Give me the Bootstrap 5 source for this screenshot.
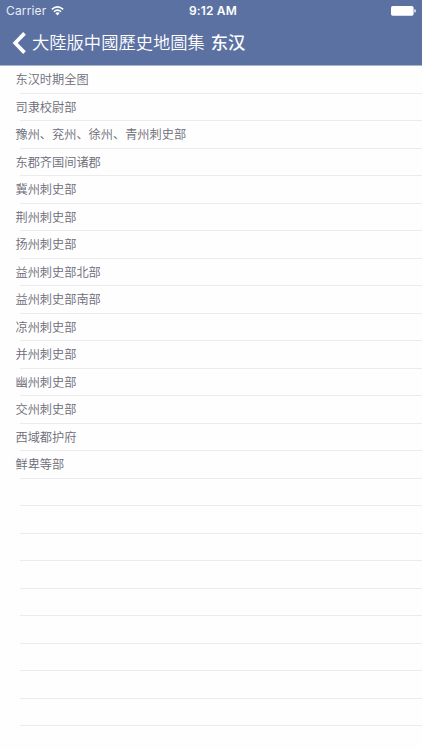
<!DOCTYPE html>
<html lang="zh-CN">
<head>
<meta charset="utf-8">
<meta name="viewport" content="width=device-width, initial-scale=1">
<title>东汉</title>
<link href="https://cdn.jsdelivr.net/npm/bootstrap@5.3.0/dist/css/bootstrap.min.css" rel="stylesheet">
<style>
body{font-family:Inter,"Noto Sans CJK SC",sans-serif;background:#fefefe;height:750px}
.app-header{background:#5b71a2;height:66px;border-bottom:1px solid #a9b5cf}
.status-bar{height:22px;font-size:12px;line-height:22px;padding-left:6px;padding-right:6px}
.carrier{font-size:12px;letter-spacing:.15px;font-weight:400;color:#e9edf6}
.wifi{margin-left:5px}
.clock{font-weight:600;font-size:12px;letter-spacing:.15px;padding-left:4px}
.title-bar{height:42px;padding-left:12px}
.app-title{font-family:"Noto Sans CJK SC",sans-serif;font-size:17.3px;line-height:40px;padding-bottom:2px;margin-left:5px;font-weight:350}
.app-title b{font-weight:500;margin-left:6px}
.map-row{height:27.5px;padding-left:15.5px;font-family:"Noto Sans CJK SC",sans-serif;font-size:12.2px;line-height:27.5px;color:#6c6c78;font-weight:350;background:linear-gradient(#ebebed,#ebebed) 20px 100%/100% 1px no-repeat}
</style>
</head>
<body class="overflow-hidden">
<header class="app-header text-white">
  <div class="status-bar row g-0 align-items-center">
    <div class="col d-flex align-items-center"><span class="carrier">Carrier</span>
      <svg class="wifi" width="13" height="10" viewBox="0 0 13 10" fill="none" stroke="#fff" stroke-width="1.5"><path d="M.8 3.4Q6.5-1.7 12.2 3.4M2.9 5.7Q6.5 2.5 10.1 5.7"/><path d="M4.4 7.1Q6.5 5.3 8.6 7.1L6.5 9.4Z" fill="#fff" stroke="none"/></svg>
    </div>
    <div class="col-auto clock">9:12 AM</div>
    <div class="col d-flex justify-content-end align-items-center">
      <svg width="25" height="11" viewBox="0 0 25 11"><rect x="0" y="0" width="22.6" height="9.8" rx="1.7" fill="#fff"/><path d="M23.4 3.3h.4q1 .3 1 1.6t-1 1.6h-.4z" fill="#fff"/></svg>
    </div>
  </div>
  <nav class="title-bar d-flex align-items-center">
    <svg width="15" height="22" viewBox="0 0 15 22" fill="none" stroke="#fff" stroke-width="3.7"><path d="M12.5 1.4 3.2 11l9.3 9.6"/></svg>
    <h1 class="app-title mb-0 text-nowrap"><span lang="zh-TW">大陸版中國歷史地圖集</span><b>东汉</b></h1>
  </nav>
</header>
<main>
  <ul class="list-unstyled mb-0">
    <li class="map-row">东汉时期全图</li>
    <li class="map-row">司隶校尉部</li>
    <li class="map-row">豫州、兖州、徐州、青州刺史部</li>
    <li class="map-row">东郡齐国间诸郡</li>
    <li class="map-row">冀州刺史部</li>
    <li class="map-row">荆州刺史部</li>
    <li class="map-row">扬州刺史部</li>
    <li class="map-row">益州刺史部北部</li>
    <li class="map-row">益州刺史部南部</li>
    <li class="map-row">凉州刺史部</li>
    <li class="map-row">并州刺史部</li>
    <li class="map-row">幽州刺史部</li>
    <li class="map-row">交州刺史部</li>
    <li class="map-row">西域都护府</li>
    <li class="map-row">鲜卑等部</li>
    <li class="map-row"></li>
    <li class="map-row"></li>
    <li class="map-row"></li>
    <li class="map-row"></li>
    <li class="map-row"></li>
    <li class="map-row"></li>
    <li class="map-row"></li>
    <li class="map-row"></li>
    <li class="map-row"></li>
  </ul>
</main>
<script src="https://cdn.jsdelivr.net/npm/bootstrap@5.3.0/dist/js/bootstrap.bundle.min.js"></script>
</body>
</html>
